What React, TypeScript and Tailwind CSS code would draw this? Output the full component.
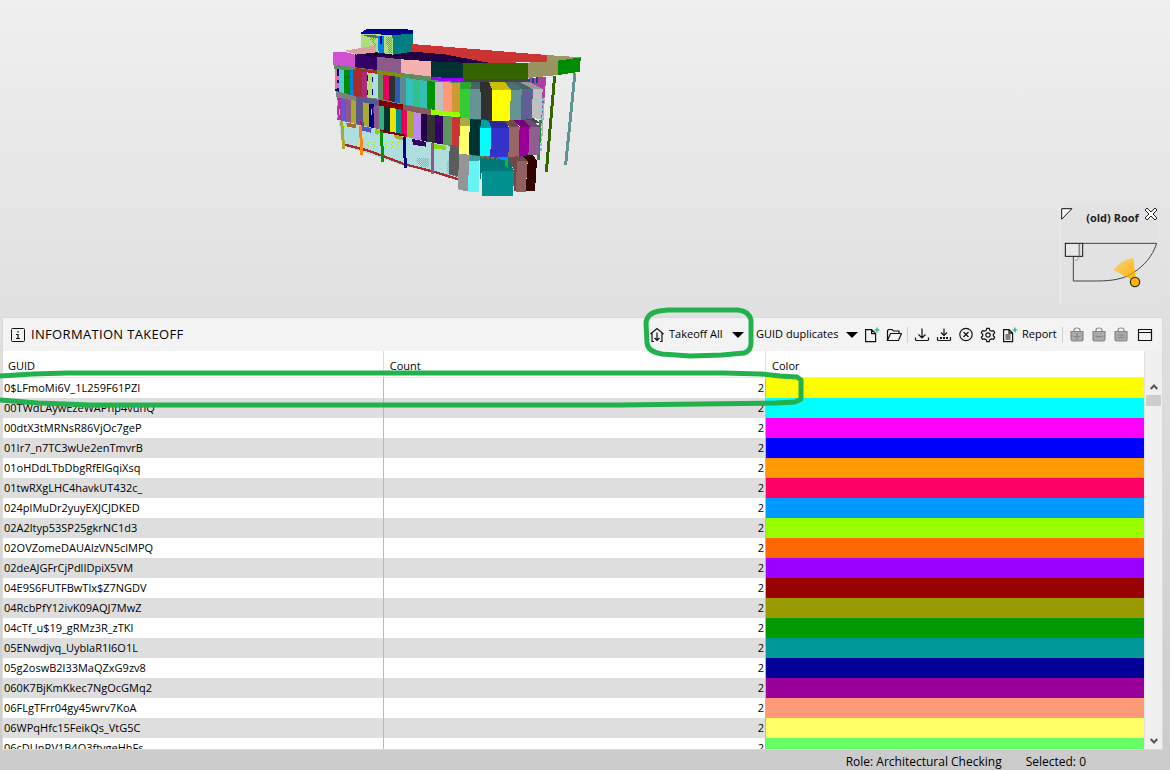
import type { ReactNode } from 'react';

type Point = [number, number];
type Slice = [number, number, string];

const rows = [
    { guid: '0$LFmoMi6V_1L259F61PZI', count: 2, color: '#ffff00' },
    { guid: '00TWdLAywEzeWAPhp4vuhQ', count: 2, color: '#00ffff' },
    { guid: '00dtX3tMRNsR86VjOc7geP', count: 2, color: '#ff00ff' },
    { guid: '01Ir7_n7TC3wUe2enTmvrB', count: 2, color: '#0000ff' },
    { guid: '01oHDdLTbDbgRfElGqiXsq', count: 2, color: '#ff9900' },
    { guid: '01twRXgLHC4havkUT432c_', count: 2, color: '#ff0066' },
    { guid: '024plMuDr2yuyEXJCJDKED', count: 2, color: '#0099ff' },
    { guid: '02A2ltyp53SP25gkrNC1d3', count: 2, color: '#99ff00' },
    { guid: '02OVZomeDAUAlzVN5clMPQ', count: 2, color: '#ff6600' },
    { guid: '02deAJGFrCjPdlIDpiX5VM', count: 2, color: '#9900ff' },
    { guid: '04E9S6FUTFBwTlx$Z7NGDV', count: 2, color: '#990000' },
    { guid: '04RcbPfY12ivK09AQJ7MwZ', count: 2, color: '#999900' },
    { guid: '04cTf_u$19_gRMz3R_zTKl', count: 2, color: '#009900' },
    { guid: '05ENwdjvq_UyblaR1l6O1L', count: 2, color: '#009999' },
    { guid: '05g2oswB2l33MaQZxG9zv8', count: 2, color: '#000099' },
    { guid: '060K7BjKmKkec7NgOcGMq2', count: 2, color: '#990099' },
    { guid: '06FLgTFrr04gy45wrv7KoA', count: 2, color: '#ff9977' },
    { guid: '06WPqHfc15FeikQs_VtG5C', count: 2, color: '#ffff66' },
    { guid: '06cDUnRV1B4Q3ftvgeHhFs', count: 2, color: '#66ff66' },
];

const upperFloor: Slice[] = [
    [30, 42, '#00007f'], [42, 58, '#4fd0cc'], [58, 74, '#008b00'], [74, 90, '#0080d8'],
    [90, 110, '#a92a2a'], [110, 126, '#a92a80'], [126, 142, '#b0e070'], [142, 158, '#b0dede'],
    [158, 174, '#5b8f5f'], [174, 191, '#e60060'], [191, 209, '#303030'], [209, 226, '#3058b8'],
    [226, 244, '#5b8b8b'], [244, 264, '#33c0c0'], [264, 286, '#33c08c'], [286, 306, '#33c0b0'],
    [306, 330, '#009400'], [330, 355, '#c0c0c0'], [355, 382, '#ff9977'], [382, 406, '#cc9933'],
];

const middleFloor: Slice[] = [
    [35, 48, '#b030a0'], [48, 64, '#6a55d0'], [64, 79, '#8b5a8b'], [79, 94, '#aaaa2c'],
    [94, 115, '#58588c'], [115, 132, '#aaaa2c'], [132, 147, '#00008b'], [147, 162, '#8b5a8b'],
    [162, 177, '#33b080'], [177, 195, '#003333'], [195, 213, '#e6e600'], [213, 229, '#008b8b'],
    [229, 246, '#e60060'], [246, 267, '#aaaa2c'], [267, 288, '#bb88ee'], [288, 306, '#220044'],
    [306, 330, '#333333'], [330, 355, '#330066'], [355, 380, '#5f935f'], [380, 406, '#cc3333'],
];

// Height of a polyline at x
function heightAt(line: Point[], x: number) {
    for (let i = 1; i < line.length; i++) {
        const [x0, y0] = line[i - 1];
        const [x1, y1] = line[i];
        if (x <= x1) return y0 + ((y1 - y0) * (x - x0)) / (x1 - x0);
    }
    return line[line.length - 1][1];
}

function Facade({ slices, top, bottom }: { slices: Slice[]; top: Point[]; bottom: Point[] }) {
    return (
        <>
            {slices.map(([a, b, color]) => (
                <polygon
                    key={a}
                    fill={color}
                    points={`${a},${heightAt(top, a)} ${b},${heightAt(top, b)} ${b},${heightAt(bottom, b)} ${a},${heightAt(bottom, a)}`}
                />
            ))}
        </>
    );
}

function Building() {
    return (
        <svg className="block h-[190px] w-[270px]" viewBox="0 0 810 570" shapeRendering="crispEdges" role="img" aria-label="Building model">
            <defs>
                <pattern id="dots" width="18" height="12" patternUnits="userSpaceOnUse">
                    <path d="M0 0h3v3h-3zM3 6h3v3h-3z" fill="#99e600" />
                </pattern>
                <pattern id="mesh" width="6" height="6" patternUnits="userSpaceOnUse">
                    <path d="M0 0h3v3h-3zM3 3h3v3h-3z" fill="#88d800" />
                </pattern>
                <pattern id="grain" width="6" height="6" patternUnits="userSpaceOnUse">
                    <path d="M0 0h3v3h-3zM3 3h3v3h-3z" fill="#999900" />
                </pattern>
            </defs>

            {/* Penthouse */}
            <polygon points="108,40 205,45 205,106 154,100 108,88" fill="#b0dd80" />
            <polygon points="118,44 158,47 158,55 118,48" fill="#4a704a" />
            <path d="M136 50h18v9h-6v9h-6v-9h-6zM148 70h6v12h-6z" fill="url(#grain)" />
            <polygon points="159,48 177,48 177,102 165,102 159,92" fill="#0080e6" />
            <path d="M165 48h6v24h-6z" fill="#0000b0" />
            <path d="M182 52h20v48h-14v-24h-6z" fill="url(#grain)" />
            <polygon points="202,44 264,40 264,98 205,106" fill="#008080" />
            <polygon points="108,38 125,27 240,27 264,31 264,41 205,45 108,41" fill="#000088" />
            <path d="M112 38 L205 41 L264 39" stroke="#0000c0" strokeWidth="3" fill="none" />

            {/* Roof */}
            <polygon points="262,72 360,80 665,105 665,127 490,128 262,98" fill="#cc3333" />
            <polygon points="60,92 154,76 154,100 100,106" fill="#dda0a0" />
            <polygon points="92,104 154,97 205,104 262,95 360,103 490,128 360,130 228,122" fill="#220044" />
            <polygon points="665,105 767,112 700,124 611,128 665,126" fill="#999966" />
            <polygon points="24,96 60,96 90,104 90,143 24,134" fill="#d050d0" />
            <polygon points="90,103 157,112 156,152 90,143" fill="#330066" />
            <polygon points="157,110 228,118 228,162 155,152" fill="#8b5a8b" />
            <polygon points="228,118 318,124 318,172 228,162" fill="#f3b0b0" />
            <polygon points="318,124 414,128 414,174 318,172" fill="#003333" />
            <polygon points="414,128 611,128 609,178 414,178" fill="#336600" />
            <polygon points="609,128 700,122 700,165 609,174" fill="#9a9360" />
            <polygon points="700,122 767,112 765,155 700,165" fill="#008b00" />

            {/* Left wing */}
            <polygon points="26,134 318,170 414,178 414,196 318,190 160,166 28,148" fill="#5b8f5f" />
            <polygon points="90,143 155,152 158,165 88,154" fill="#a92a2a" />
            <polygon points="156,152 230,162 230,172 157,164" fill="#8b8b00" />
            <polygon points="318,172 414,174 414,187 318,180" fill="#9900ff" />
            <polygon points="32,208 165,230 405,270 405,294 300,292 35,236" fill="#808080" />
            <polygon points="90,226 160,240 235,256 235,272 162,260 100,246" fill="#58588c" />
            <polygon points="162,240 235,254 235,272 162,260" fill="#800000" />
            <polygon points="235,254 318,268 318,286 233,272" fill="#8b5a5a" />
            <polygon points="318,268 408,276 408,296 318,286" fill="#99ff00" />
            <Facade
                slices={upperFloor}
                top={[[30, 147], [90, 152], [160, 162], [240, 174], [320, 185], [406, 189]]}
                bottom={[[30, 212], [90, 228], [160, 236], [225, 250], [320, 269], [406, 278]]}
            />
            <polygon points="84,148 112,152 100,231 86,228" fill="#a92a2a" />
            <path d="M30 150h3v57M36 170h3v10M36 190h3v14" stroke="#e070b0" strokeWidth="4" fill="none" />
            <path d="M127 164v20M142 170v16M142 206v20M127 210v14" stroke="#0000c0" strokeWidth="4" />
            <polygon points="40,298 160,320 240,344 300,358 374,374 374,470 240,438 52,376" fill="#b0dede" />
            <Facade
                slices={middleFloor}
                top={[[35, 232], [100, 244], [165, 257], [240, 271], [300, 283], [406, 292]]}
                bottom={[[35, 298], [100, 314], [160, 327], [240, 350], [300, 364], [406, 383]]}
            />
            <polygon points="92,236 102,238 118,317 96,316" fill="#58588c" />
            <path d="M38 240v18M44 268v18M140 268v16M38 284v10" stroke="#c0e000" strokeWidth="4" />
            <path d="M145 262v18M108 304v12" stroke="#e60060" strokeWidth="4" />
            <polygon points="64,308 94,314 92,324 66,320" fill="#a86c28" />
            <polygon points="110,318 140,324 138,338 112,332" fill="#5555cc" />
            <polygon points="152,326 172,332 158,344 148,340" fill="#88d800" />
            <polygon points="206,342 234,350 232,362 210,354" fill="#aaaa2c" />
            <polygon points="166,328 240,344 240,350 166,336" fill="#800000" />
            <polygon points="260,356 304,366 302,380 264,374" fill="#330066" />
            <polygon points="328,372 364,378 364,390 328,386" fill="#88d800" />
            <path d="M124 366h36v20h-36zM176 366h54v24h-54zM55 310h14v14h-14z" fill="url(#dots)" />
            <path d="M276 414l36 0v28h-24l-12 -14z" fill="url(#mesh)" />
            <path d="M366 424h8v44h-8z" fill="url(#mesh)" />
            <polygon points="374,374 404,382 402,472 372,464" fill="#5c5c5c" />
            <path d="M366 462l36 6v12z" fill="url(#mesh)" />
            <path d="M56 373 L130 392 L240 433 L330 456 L402 479" stroke="#aa2828" strokeWidth="7" fill="none" />
            <path d="M50 304 L56 388" stroke="#aaaa2c" strokeWidth="9" />
            <path d="M106 318 L111 406" stroke="#ff8800" strokeWidth="9" />
            <path d="M169 332 L173 425" stroke="#009400" strokeWidth="9" />
            <path d="M238 350 L241 445" stroke="#00008b" strokeWidth="9" />
            <path d="M322 368 L323 462" stroke="#8b5a8b" strokeWidth="9" />

            {/* Corner bays */}
            <g transform="translate(360)">
                <polygon points="54,176 250,176 250,190 54,188" fill="#444444" />
                <polygon points="44,290 262,290 284,310 44,306" fill="#444455" />
                <polygon points="70,400 262,400 262,420 70,414" fill="#446666" />
                <polygon points="248,176 304,170 298,240 290,300 250,200" fill="#b040a0" />
                <path d="M252 178v14M264 174v14M276 172v18" stroke="#005080" strokeWidth="4" />
                <path d="M294 234 L288 400" stroke="#66c8c8" strokeWidth="5" strokeDasharray="9 6" />
                <path d="M286 300 L280 420" stroke="#228b44" strokeWidth="8" />
                <path d="M298 236 L291 350" stroke="#b0b0b0" strokeWidth="3" />

                <polygon points="45,206 52,187 78,187 76,206 74,297 45,292" fill="#33cc33" />
                <polygon points="48,187 78,187 74,206 45,206" fill="#2aa82a" />
                <polygon points="76,206 110,206 108,297 74,297" fill="#669494" />
                <polygon points="78,187 108,185 110,208 76,208" fill="#446666" />
                <polygon points="106,186 138,187 144,208 140,300 108,297" fill="#303030" />
                <polygon points="142,208 198,208 194,303 140,302" fill="#ffff00" />
                <polygon points="132,186 182,187 198,210 142,210" fill="#c8bf00" />
                <polygon points="198,208 232,206 230,300 194,302" fill="#669494" />
                <polygon points="180,187 212,187 234,208 198,210" fill="#4c7070" />
                <polygon points="230,206 264,206 260,297 228,300" fill="#606094" />
                <polygon points="206,187 232,187 264,206 232,208" fill="#446666" />
                <polygon points="264,206 293,206 289,297 260,294" fill="#c0c0c0" />
                <polygon points="226,187 250,185 293,206 264,208" fill="#999999" />

                <polygon points="45,316 75,316 71,404 41,402" fill="#ffff66" />
                <polygon points="46,294 77,296 75,318 43,318" fill="#aaaa44" />
                <polygon points="75,298 108,300 104,408 71,402" fill="#003333" />
                <polygon points="106,322 138,322 136,408 104,408" fill="#00ffff" />
                <polygon points="108,300 132,302 138,324 106,324" fill="#00a0a8" />
                <polygon points="138,322 193,322 190,412 136,412" fill="#3333cc" />
                <polygon points="132,302 180,303 193,325 138,325" fill="#282898" />
                <polygon points="193,320 224,320 221,410 190,412" fill="#996666" />
                <polygon points="178,303 206,300 225,322 193,322" fill="#704848" />
                <polygon points="224,318 254,318 250,408 221,410" fill="#990099" />
                <polygon points="206,300 234,300 256,320 224,320" fill="#780078" />
                <polygon points="254,318 285,318 281,404 250,408" fill="#8f5f8f" />
                <polygon points="232,298 262,302 285,320 254,320" fill="#704870" />

                <polygon points="41,402 74,404 70,515 40,508" fill="#959595" />
                <polygon points="72,420 103,420 101,515 69,515" fill="#66f4f4" />
                <polygon points="74,406 106,408 103,424 72,422" fill="#3aa0a0" />
                <polygon points="106,412 190,412 208,456 110,456 104,490" fill="#007878" />
                <polygon points="111,452 208,452 204,527 110,527" fill="#009090" />
                <path d="M108 410 l48 6" stroke="#a86820" strokeWidth="6" strokeDasharray="9 6" />
                <polygon points="158,412 190,412 190,420 160,418" fill="#0090ff" />
                <polygon points="190,414 216,408 248,422 216,424 212,514 206,512 207,450" fill="#704848" />
                <polygon points="180,418 190,416 190,444 180,438" fill="#22b030" />
                <polygon points="216,422 248,422 242,515 212,517" fill="#936060" />
                <polygon points="232,408 262,404 276,422 270,512 242,514 248,424" fill="#330000" />

                <path d="M329 168 L304 455" stroke="#336600" strokeWidth="9" />
                <path d="M390 158 L362 434" stroke="#5f9494" strokeWidth="9" />
            </g>
        </svg>
    );
}

function MiniMap() {
    return (
        <aside className="absolute right-3 bottom-3 h-[98px] w-[98px] border-l border-[#eaeaea] bg-[#e2e2e2]">
            <div className="flex h-[22px] items-center justify-between">
                <button aria-label="Collapse map" className="mb-2">
                    <svg className="block h-3 w-3" viewBox="0 0 12 12" fill="#fff" stroke="#111">
                        <path d="M.7.7h10.2L.7 11.2z" />
                    </svg>
                </button>
                <span className="ml-2 text-[11px] leading-5 font-bold text-[#222]">(old) Roof</span>
                <button aria-label="Close map" className="mb-2">
                    <svg className="block h-3.5 w-3.5" viewBox="0 0 14 14" fill="#fff" stroke="#222">
                        <path d="M3 1 7 5l4-4 2 2-4 4 4 4-2 2-4-4-4 4-2-2 4-4-4-4z" />
                    </svg>
                </button>
            </div>
            <svg className="mt-3 block h-[50px] w-[97px]" viewBox="3 3 291 150" fill="none" stroke="#444" strokeWidth="3">
                <defs>
                    <linearGradient id="cone" x1="0" y1="0" x2="1" y2="1">
                        <stop offset="0" stopColor="#f8d28c" />
                        <stop offset="1" stopColor="#ffb400" />
                    </linearGradient>
                </defs>
                <path d="M68 10H290C278 48 252 78 220 98C192 116 160 123 110 123H40V49" />
                <path d="M44 60c8 4 12-2 10-10" stroke="#999" />
                <rect x="16" y="10" width="52" height="39" fill="#e8e8e8" stroke="#111" />
                <path d="M58 12v36" stroke="#888" strokeWidth="5" />
                <path d="M161 90Q183 58 220 54L226 110 212 118Z" fill="url(#cone)" stroke="none" />
                <path d="M190 114Q206 108 222 96" stroke="#c08a20" />
                <circle cx="225" cy="126" r="14" fill="#ffb400" stroke="#333" strokeWidth="4" />
            </svg>
        </aside>
    );
}

function Icon({ children }: { children: ReactNode }) {
    return (
        <svg className="block h-4 w-4 shrink-0" viewBox="0 0 16 16" fill="none" stroke="#111" strokeWidth="1.2">
            {children}
        </svg>
    );
}

function Caret() {
    return (
        <svg className="block h-1.5 w-3 shrink-0" viewBox="0 0 12 6">
            <path d="M0 0h12L6 6z" fill="#000" />
        </svg>
    );
}

function Bag({ sign }: { sign: string }) {
    return (
        <svg className="block h-4 w-4" viewBox="0 0 16 16" fill="none" stroke="#888" strokeWidth="1.2">
            <path d="M2 4.500h12v8q0 1.500-1.500 1.500h-9Q2 14 2 12.500z" fill="#aaa" />
            <path d="M5 4.500V3q0-2 3-2t3 2v1.500" />
            <path d={sign} />
        </svg>
    );
}

function Separator() {
    return <span className="-ml-px h-4 w-px shrink-0 bg-[#cfcfcf]" />;
}

function Toolbar() {
    return (
        <div className="flex items-center gap-1.5">
            <button className="mr-1.5 flex items-center">
                <Icon>
                    <path d="M1.500 7 8 1.500 14.500 7M3 6v8.500h2M13 6v8.500h-2M8 5.500v8M5.500 11 8 13.500 10.500 11" />
                </Icon>
                <span className="ml-1 w-[63px] text-left whitespace-nowrap">Takeoff All</span>
                <Caret />
            </button>
            <button className="flex items-center">
                <span className="w-[90px] text-left whitespace-nowrap">GUID duplicates</span>
                <Caret />
            </button>
            <button aria-label="New takeoff">
                <Icon>
                    <path d="M1.600 2.600h6l4 4v8h-10zM7.600 2.600v4h4" />
                    <path d="M13 .5v5M10.500 3h5" stroke="#10b070" />
                </Icon>
            </button>
            <button aria-label="Open takeoff">
                <Icon>
                    <path d="M1.500 13.500v-10l1-1h3.500l1.500 1.500h5.500v2.500M1.500 13.500 4.500 6.500h11L12.500 13.500z" />
                </Icon>
            </button>
            <Separator />
            <button aria-label="Import">
                <Icon>
                    <path d="M8 1.500v9.500M4.500 7.500 8 11l3.500-3.500M1.500 10.500v2q0 1 1 1h11q1 0 1-1v-2" />
                </Icon>
            </button>
            <button aria-label="Import all">
                <Icon>
                    <path d="M8 1.500v6.500M5 5.500 8 8.500l3-3M1.500 10v2.500q0 1 1 1h11q1 0 1-1V10" />
                    <path d="M4 11h8" strokeWidth="2" strokeDasharray="2 1" />
                </Icon>
            </button>
            <button aria-label="Clear">
                <Icon>
                    <circle cx="8" cy="7.500" r="6.200" />
                    <path d="m5.500 5 5 5M10.500 5l-5 5" />
                </Icon>
            </button>
            <button aria-label="Settings">
                <Icon>
                    <path d="m6.800 1.300h2.400l.6 2 1.700.9 2-.5 1.200 2-1.400 1.600v1.400l1.400 1.600-1.200 2-2-.5-1.700.9-.6 2H6.800l-.6-2-1.700-.9-2 .5-1.200-2 1.400-1.600V7.300L1.300 5.700l1.200-2 2 .5 1.700-.9z" />
                    <circle cx="8" cy="8" r="2.200" />
                </Icon>
            </button>
            <button className="flex items-center gap-1">
                <Icon>
                    <path d="M1.600 2.600h5.500l3.500 3.500v8.500h-9zM7 2.600v3.500h3.600M3.500 8h5M3.500 10h5M3.500 12h5" />
                    <path d="M13 .5v5M10.500 3h5" stroke="#10b070" />
                </Icon>
                <span className="w-[35px] text-left">Report</span>
            </button>
            <Separator />
            <button aria-label="Add to selection" disabled>
                <Bag sign="M8 6v7M4.500 9.500h7" />
            </button>
            <button aria-label="Remove from selection" disabled>
                <Bag sign="M4.500 9.500h7" />
            </button>
            <button aria-label="Set selection" disabled>
                <Bag sign="M4.500 8h7M4.500 10.500h7" />
            </button>
            <button aria-label="Maximize panel" className="ml-0.5">
                <Icon>
                    <path d="M1.500 2.500h13v11h-13zM1.500 5.500h13" />
                </Icon>
            </button>
        </div>
    );
}

function TakeoffTable() {
    return (
        <table className="w-full table-fixed border-collapse bg-white">
            <thead>
                <tr className="h-[26px] border-b border-[#e8e8e8] text-left">
                    <th className="w-1/3 pt-1 pl-[5px] font-normal">GUID</th>
                    <th className="w-[33.5%] border-l border-[#dddddd] pt-1 pl-1.5 font-normal">Count</th>
                    <th className="border-l border-[#dddddd] pt-1 pl-1.5 font-normal">Color</th>
                </tr>
            </thead>
            <tbody>
                {rows.map((row) => (
                    <tr key={row.guid} className="h-5 leading-5 even:bg-[#dedede]">
                        <td className="p-0 pl-px whitespace-nowrap">{row.guid}</td>
                        <td className="border-l border-[#b8b8b8] p-0 pr-px text-right">{row.count}</td>
                        <td className="border-l border-[#b8b8b8] p-0" style={{ backgroundColor: row.color }} />
                    </tr>
                ))}
            </tbody>
        </table>
    );
}

function ScrollBar() {
    return (
        <div className="flex w-[18px] shrink-0 flex-col border-l border-[#e0e0e0] bg-[#f0f0f0] pt-[27px]">
            <button aria-label="Scroll up" className="flex h-[17px] items-center justify-center">
                <svg className="h-2 w-2" viewBox="0 0 8 8" fill="none" stroke="#555" strokeWidth="2">
                    <path d="m.7 6 3.300-3.500L7.300 6" />
                </svg>
            </button>
            <div className="mx-px h-[11px] bg-[#cdcdcd]" />
            <button aria-label="Scroll down" className="mt-auto flex h-[17px] items-center justify-center">
                <svg className="h-2 w-2" viewBox="0 0 8 8" fill="none" stroke="#555" strokeWidth="2">
                    <path d="m.7 2 3.300 3.500L7.300 2" />
                </svg>
            </button>
        </div>
    );
}

// Hand-drawn markers around the takeoff button and the first row
function Markup() {
    return (
        <svg className="pointer-events-none absolute top-0 left-0 h-[420px] w-[820px]" viewBox="0 0 820 420" fill="none" stroke="#22b14c" strokeWidth="5" strokeLinejoin="round">
            <path d="M659 311 668 310H738Q749 311 751 320V343Q751 351 744 353L722 355 690 356 662 354Q648 352 647 343L646 323Q647 313 659 311Z" />
            <path d="M0 376 33 374 67 373H724L761 374 780 376 797 377 801 380V399L795 402 776 403 700 404 620 405H91L38 403 0 400" />
        </svg>
    );
}

export default function App() {
    return (
        <div className="relative flex h-screen flex-col overflow-hidden bg-linear-to-b from-[#efefef] to-[#cbcbcb] font-['Open_Sans','Noto_Sans',sans-serif] text-[11px] text-black">
            <main className="relative h-[317px] shrink-0 pt-5 pl-[325px]">
                <Building />
                <MiniMap />
            </main>

            <section className="mr-[7px] ml-0.5 flex min-h-0 flex-1 flex-col border border-[#dadada]">
                <header className="flex h-[33px] shrink-0 items-center justify-between bg-[#f3f3f3] pr-[9px] pl-2">
                    <h2 className="flex items-center gap-1.5 text-[13px] tracking-wide">
                        <svg className="block h-3.5 w-3.5" viewBox="0 0 14 14" fill="none" stroke="#111">
                            <rect x=".5" y=".5" width="13" height="13" rx="1" />
                            <path d="M7 3v1.500M5 6.500h2v4M5 10.500h4" strokeWidth="1.200" />
                        </svg>
                        INFORMATION TAKEOFF
                    </h2>
                    <Toolbar />
                </header>
                <div className="flex min-h-0 flex-1">
                    <div className="min-w-0 flex-1 overflow-hidden">
                        <TakeoffTable />
                    </div>
                    <ScrollBar />
                </div>
            </section>

            <footer className="flex h-5 shrink-0 items-center justify-end gap-6 pt-1 pr-[84px] text-[12px]">
                <span>Role: Architectural Checking</span>
                <span>Selected: 0</span>
            </footer>

            <Markup />
        </div>
    );
}
